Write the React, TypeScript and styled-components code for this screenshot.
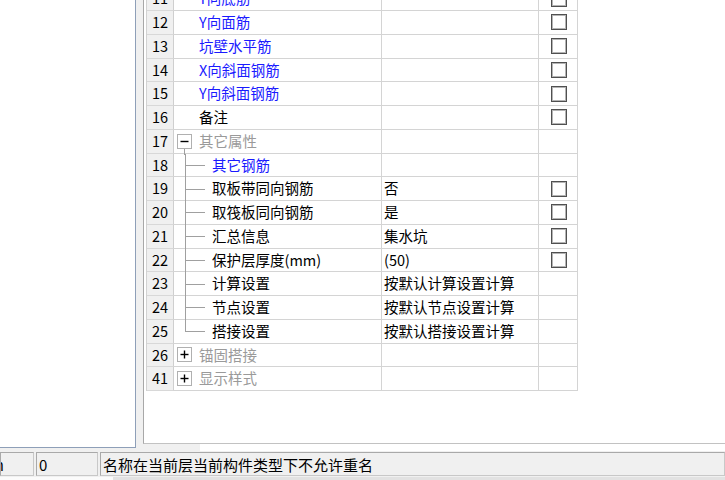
import React from 'react';
import styled, { createGlobalStyle } from 'styled-components';

type Tone = 'blue' | 'black' | 'grey';
type Tree = 'none' | 'open' | 'closed' | 'child' | 'last';

interface PropRow {
  no: number;
  name: string;
  tone: Tone;
  tree: Tree;
  value?: string;
  check?: boolean;
}

const rows: PropRow[] = [
  { no: 11, name: 'Y向底筋', tone: 'blue', tree: 'none', check: true },
  { no: 12, name: 'Y向面筋', tone: 'blue', tree: 'none', check: true },
  { no: 13, name: '坑壁水平筋', tone: 'blue', tree: 'none', check: true },
  { no: 14, name: 'X向斜面钢筋', tone: 'blue', tree: 'none', check: true },
  { no: 15, name: 'Y向斜面钢筋', tone: 'blue', tree: 'none', check: true },
  { no: 16, name: '备注', tone: 'black', tree: 'none', check: true },
  { no: 17, name: '其它属性', tone: 'grey', tree: 'open' },
  { no: 18, name: '其它钢筋', tone: 'blue', tree: 'child' },
  { no: 19, name: '取板带同向钢筋', tone: 'black', tree: 'child', value: '否', check: true },
  { no: 20, name: '取筏板同向钢筋', tone: 'black', tree: 'child', value: '是', check: true },
  { no: 21, name: '汇总信息', tone: 'black', tree: 'child', value: '集水坑', check: true },
  { no: 22, name: '保护层厚度(mm)', tone: 'black', tree: 'child', value: '(50)', check: true },
  { no: 23, name: '计算设置', tone: 'black', tree: 'child', value: '按默认计算设置计算' },
  { no: 24, name: '节点设置', tone: 'black', tree: 'child', value: '按默认节点设置计算' },
  { no: 25, name: '搭接设置', tone: 'black', tree: 'last', value: '按默认搭接设置计算' },
  { no: 26, name: '锚固搭接', tone: 'grey', tree: 'closed' },
  { no: 41, name: '显示样式', tone: 'grey', tree: 'closed' },
];

const toneColor: Record<Tone, string> = {
  blue: '#1a1aff',
  black: '#000000',
  grey: '#9a9a9a',
};

const App: React.FC = () => {
  return (
    <Screen>
      <GlobalStyle />
      <Main>
        <LeftPanel />
        <RightColumn>
          <RightPanel>
            <Grid>
              {rows.map(row => (
                <React.Fragment key={row.no}>
                  <NoCell>{row.no}</NoCell>
                  <NameCell $tree={row.tree} $tone={row.tone}>
                    {(row.tree === 'open' || row.tree === 'closed') && (
                      <Expander $open={row.tree === 'open'}>
                        <svg width="13" height="13" viewBox="0 0 13 13">
                          <path d="M2.5 6.5h8" stroke="#000" strokeWidth="1.4" />
                          {row.tree === 'closed' && (
                            <path d="M6.5 2.5v8" stroke="#000" strokeWidth="1.4" />
                          )}
                        </svg>
                      </Expander>
                    )}
                    {(row.tree === 'child' || row.tree === 'last') && (
                      <Connector $last={row.tree === 'last'} />
                    )}
                    <span>{row.name}</span>
                  </NameCell>
                  <ValueCell>{row.value}</ValueCell>
                  <CheckCell>{row.check && <CheckBox />}</CheckCell>
                </React.Fragment>
              ))}
            </Grid>
          </RightPanel>
          <UnderStrip>
            <StripGrey />
            <StripWhite />
          </UnderStrip>
        </RightColumn>
      </Main>
      <StatusBar>
        <StatusPane $width={34} $align="end">
          m
        </StatusPane>
        <StatusPane $width={62}>0</StatusPane>
        <StatusPane $grow>名称在当前层当前构件类型下不允许重名</StatusPane>
      </StatusBar>
      <BottomEdge>
        <EdgeLight />
        <EdgeGrey />
      </BottomEdge>
    </Screen>
  );
};

const GlobalStyle = createGlobalStyle`
  html, body {
    margin: 0;
    padding: 0;
    background: #f0f0f0;
  }
  body {
    font-family: "Noto Sans CJK SC", "Liberation Sans", sans-serif;
  }
`;

const Screen = styled.div`
  width: 725px;
  height: 480px;
  overflow: hidden;
  display: flex;
  flex-direction: column;
  background: #f0f0f0;
`;

const Main = styled.div`
  display: flex;
  height: 451px;
  flex-shrink: 0;
`;

const LeftPanel = styled.div`
  width: 135px;
  height: 447px;
  flex-shrink: 0;
  background: #ffffff;
  border-right: 1px solid #8e9fb8;
  border-bottom: 1px solid #8e9fb8;
`;

const RightColumn = styled.div`
  flex: 1;
  margin-left: 7px;
  display: flex;
  flex-direction: column;
  min-width: 0;
`;

const RightPanel = styled.div`
  height: 443px;
  flex-shrink: 0;
  background: #ffffff;
  border-left: 1px solid #a8a8a8;
  border-bottom: 1px solid #c2c2c2;
  padding-left: 2px;
  overflow: hidden;
`;

const UnderStrip = styled.div`
  flex: 1;
  display: flex;
`;

const StripGrey = styled.div`
  width: 57px;
  background: #f0f0f0;
`;

const StripWhite = styled.div`
  flex: 1;
  background: #ffffff;
`;

const Grid = styled.div`
  display: grid;
  grid-template-columns: 27px 208px 157px 39px;
  grid-auto-rows: 23.75px;
  width: max-content;
  margin-top: -12.75px;
  border-left: 1px solid #d2d2d2;
  font-size: 14.5px;
  line-height: 1;
`;

const Cell = styled.div`
  display: flex;
  align-items: center;
  border-right: 1px solid #d4d4d4;
  border-bottom: 1px solid #d4d4d4;
  white-space: nowrap;
  overflow: hidden;
`;

const NoCell = styled(Cell)`
  justify-content: center;
  background: #f0f0f0;
  border-right-color: #cfcfcf;
  border-bottom-color: #d8d8d8;
  color: #000;
`;

const NameCell = styled(Cell)<{ $tree: Tree; $tone: Tone }>`
  position: relative;
  overflow: visible;
  color: ${p => toneColor[p.$tone]};
  padding-left: ${p =>
    p.$tree === 'none' ? '25px' : p.$tree === 'open' || p.$tree === 'closed' ? '3px' : '0'};
`;

const Expander = styled.span<{ $open: boolean }>`
  position: relative;
  width: 13px;
  height: 13px;
  margin-right: 7px;
  border: 1px solid #b0b0b0;
  background: #fff;
  flex-shrink: 0;
  display: flex;

  &::after {
    content: '';
    display: ${p => (p.$open ? 'block' : 'none')};
    position: absolute;
    left: 6px;
    top: 14px;
    width: 1px;
    height: 6px;
    background: #a0a0a0;
  }
`;

const Connector = styled.span<{ $last: boolean }>`
  position: relative;
  width: 31px;
  margin-right: 7px;
  align-self: stretch;
  flex-shrink: 0;

  &::before {
    content: '';
    position: absolute;
    left: 11px;
    top: 0;
    width: 1px;
    bottom: ${p => (p.$last ? '50%' : '-1px')};
    background: #a0a0a0;
  }

  &::after {
    content: '';
    position: absolute;
    left: 11px;
    top: 50%;
    width: 20px;
    height: 1px;
    background: #a0a0a0;
  }
`;

const ValueCell = styled(Cell)`
  padding-left: 2px;
  color: #000;
`;

const CheckCell = styled(Cell)`
  justify-content: center;
`;

const CheckBox = styled.span`
  width: 14px;
  height: 14px;
  margin-left: 1px;
  border: 1px solid #505050;
  box-shadow: inset 0 0 0 1px #b4b4b4;
  background: #fff;
`;

const StatusBar = styled.div`
  height: 26px;
  flex-shrink: 0;
  display: flex;
  gap: 2px;
  padding-top: 1px;
  box-sizing: border-box;
  background: #f0f0f0;
  font-size: 15px;
  color: #000;
`;

const StatusPane = styled.div<{ $width?: number; $grow?: boolean; $align?: 'end' }>`
  height: 24px;
  box-sizing: border-box;
  ${p => (p.$width ? `width: ${p.$width}px;` : '')}
  ${p => (p.$grow ? 'flex: 1;' : 'flex-shrink: 0;')}
  display: flex;
  align-items: center;
  justify-content: ${p => (p.$align === 'end' ? 'flex-end' : 'flex-start')};
  padding: ${p => (p.$align === 'end' ? '0 29px 0 0' : '0 0 0 2px')};
  border: 1px solid #c8c8c8;
  border-top-color: #a9a9a9;
  border-left-color: #a9a9a9;
  overflow: hidden;
  white-space: nowrap;
  line-height: 1;
`;

const BottomEdge = styled.div`
  flex: 1;
  display: flex;
`;

const EdgeLight = styled.div`
  width: 113px;
  background: #fbfbfb;
`;

const EdgeGrey = styled.div`
  flex: 1;
  background: #e2e2e2;
`;

export default App;
